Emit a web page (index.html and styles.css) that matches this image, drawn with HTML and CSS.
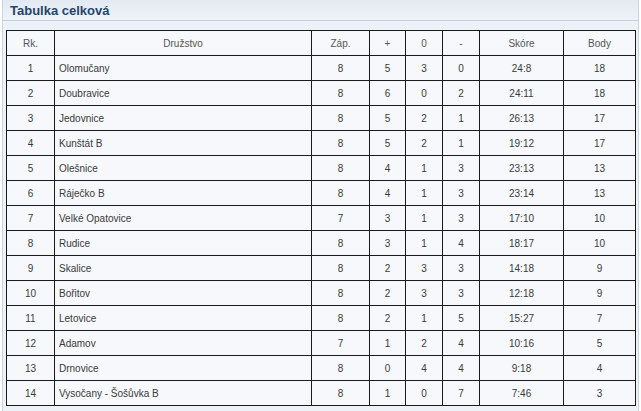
FILE: index.html
```html
<!DOCTYPE html>
<html lang="cs">
<head>
<meta charset="utf-8">
<link rel="stylesheet" href="styles.css">
</head>
<body>
<div class="panel">
  <div class="panel-head">Tabulka celková</div>
  <div class="panel-body">
    <table class="standings">
      <colgroup>
        <col class="c-rk"><col class="c-team"><col class="c-zap"><col class="c-w"><col class="c-d"><col class="c-l"><col class="c-score"><col class="c-pts">
      </colgroup>
      <thead>
        <tr><th>Rk.</th><th>Družstvo</th><th>Záp.</th><th>+</th><th>0</th><th>-</th><th>Skóre</th><th>Body</th></tr>
      </thead>
      <tbody>
        <tr><td>1</td><td class="team">Olomučany</td><td>8</td><td>5</td><td>3</td><td>0</td><td>24:8</td><td>18</td></tr>
        <tr><td>2</td><td class="team">Doubravice</td><td>8</td><td>6</td><td>0</td><td>2</td><td>24:11</td><td>18</td></tr>
        <tr><td>3</td><td class="team">Jedovnice</td><td>8</td><td>5</td><td>2</td><td>1</td><td>26:13</td><td>17</td></tr>
        <tr><td>4</td><td class="team">Kunštát B</td><td>8</td><td>5</td><td>2</td><td>1</td><td>19:12</td><td>17</td></tr>
        <tr><td>5</td><td class="team">Olešnice</td><td>8</td><td>4</td><td>1</td><td>3</td><td>23:13</td><td>13</td></tr>
        <tr><td>6</td><td class="team">Ráječko B</td><td>8</td><td>4</td><td>1</td><td>3</td><td>23:14</td><td>13</td></tr>
        <tr><td>7</td><td class="team">Velké Opatovice</td><td>7</td><td>3</td><td>1</td><td>3</td><td>17:10</td><td>10</td></tr>
        <tr><td>8</td><td class="team">Rudice</td><td>8</td><td>3</td><td>1</td><td>4</td><td>18:17</td><td>10</td></tr>
        <tr><td>9</td><td class="team">Skalice</td><td>8</td><td>2</td><td>3</td><td>3</td><td>14:18</td><td>9</td></tr>
        <tr><td>10</td><td class="team">Bořitov</td><td>8</td><td>2</td><td>3</td><td>3</td><td>12:18</td><td>9</td></tr>
        <tr><td>11</td><td class="team">Letovice</td><td>8</td><td>2</td><td>1</td><td>5</td><td>15:27</td><td>7</td></tr>
        <tr><td>12</td><td class="team">Adamov</td><td>7</td><td>1</td><td>2</td><td>4</td><td>10:16</td><td>5</td></tr>
        <tr><td>13</td><td class="team">Drnovice</td><td>8</td><td>0</td><td>4</td><td>4</td><td>9:18</td><td>4</td></tr>
        <tr><td>14</td><td class="team">Vysočany - Šošůvka B</td><td>8</td><td>1</td><td>0</td><td>7</td><td>7:46</td><td>3</td></tr>
      </tbody>
    </table>
  </div>
</div>
</body>
</html>
```
FILE: styles.css
```css
html, body {
  margin: 0;
  padding: 0;
  background: #ffffff;
}
body {
  font-family: "Liberation Sans", Arial, sans-serif;
  width: 641px;
  height: 411px;
  overflow: hidden;
}
.panel {
  margin: 0 2px 0 2px;
  border-left: 1px solid #c8d4e2;
  border-right: 1px solid #c8d4e2;
  background: #edf2f8;
  height: 411px;
  box-sizing: border-box;
}
.panel-head {
  height: 21px;
  box-sizing: border-box;
  padding: 3px 0 0 7px;
  background: linear-gradient(#e2e9f2, #eef3f8);
  border-bottom: 1px solid #c3cfdd;
  color: #25456a;
  font-size: 13px;
  font-weight: bold;
  line-height: 15px;
}
.panel-body {
  padding: 9px 0 0 3px;
}
.standings {
  border-collapse: collapse;
  table-layout: fixed;
  width: 629px;
  background: #f6f8fb;
  font-size: 10px;
  color: #3a3a3a;
}
.c-rk { width: 48px; }
.c-team { width: 257px; }
.c-zap { width: 58px; }
.c-w { width: 36px; }
.c-d { width: 37px; }
.c-l { width: 37px; }
.c-score { width: 84px; }
.c-pts { width: 72px; }
.standings th,
.standings td {
  border: 1px solid #1a1a1a;
  height: 24px;
  padding: 0;
  text-align: center;
  font-weight: normal;
}
.standings th {
  color: #555;
}
.standings td.team {
  text-align: left;
  padding-left: 4px;
}
```
